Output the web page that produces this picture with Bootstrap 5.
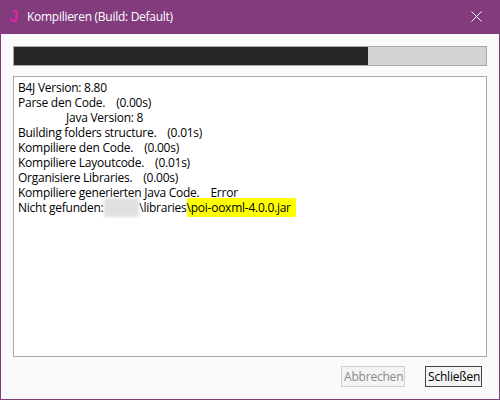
<!DOCTYPE html>
<html lang="de">
<head>
<meta charset="utf-8">
<title>Kompilieren (Build: Default)</title>
<link href="https://cdn.jsdelivr.net/npm/bootstrap@5.3.0/dist/css/bootstrap.min.css" rel="stylesheet">
<style>
html, body { height: 100%; margin: 0; overflow: hidden; }
body { background: #fafafa; font-family: "Open Sans", "Noto Sans", sans-serif; font-size: 12px; color: #000; }
.dlg-win { width: 500px; height: 400px; border: 1px solid #823b7c; border-top: 0; background: #fafafa; }
.dlg-title { height: 34px; margin: 0 -1px; background: #823b7c; color: #fff; padding-left: 9px; padding-right: 18px; padding-bottom: 1px; font-size: 12px; letter-spacing: -.28px; flex: none; }
.dlg-logo { color: #d9269c; font-family: "Liberation Sans", sans-serif; font-weight: 700; font-size: 17px; width: 18px; line-height: 1; }
.dlg-bar { height: 20px; margin: 12px 12px 0; border: 1px solid #a9a9a9; border-radius: 0; background: #d3d3d3; flex: none; }
.dlg-fill { width: 354px; background: #262626; }
.dlg-log { height: 281px; margin: 10px 12px 0; border: 1px solid #a9a9a9; background: #fff; padding: 3px 4px; line-height: 15px; letter-spacing: -.25px; flex: none; }
.dlg-log > div { white-space: pre; height: 15px; }
.dlg-indent { padding-left: 48px; }
.dlg-gap { padding-left: 11px; }
.dlg-blur { display: inline-block; vertical-align: top; width: 35px; height: 19px; margin: -2px 0 -2px -2px; background: #e0e0e0; filter: blur(1.5px); }
.dlg-hl { background: #ffff00; display: inline-block; vertical-align: top; height: 19px; margin-top: -2px; padding: 2px 5px 0 0; }
.dlg-foot { margin: 9px 17px 0 0; }
.dlg-btn { height: 21px; padding: 0 2px; border-radius: 0; font-size: 12px; line-height: 17px; letter-spacing: -.2px; background: #f4f4f4; color: #000; white-space: nowrap; }
.dlg-btn-off { width: 64px; --bs-btn-disabled-color: #8a8a8a; --bs-btn-disabled-bg: #f4f4f4; --bs-btn-disabled-border-color: #cfcfcf; --bs-btn-disabled-opacity: 1; }
.dlg-btn-on { width: 57px; border: 1px solid #444; margin-left: 20px; }
</style>
</head>
<body>
<div class="dlg-win d-flex flex-column">
  <div class="dlg-title d-flex align-items-center">
    <span class="dlg-logo">J</span>
    <span class="flex-grow-1">Kompilieren (Build: Default)</span>
    <svg width="11" height="11" viewBox="0 0 11 11" aria-label="Schließen"><path d="M.5.5l10 10M10.500.5l-10 10" stroke="#fff" stroke-width="1" fill="none"/></svg>
  </div>
  <div class="progress dlg-bar"><div class="progress-bar dlg-fill"></div></div>
  <div class="dlg-log">
<div>B4J Version: 8.80</div>
<div>Parse den Code.<span class="dlg-gap">(0.00s)</span></div>
<div class="dlg-indent">Java Version: 8</div>
<div>Building folders structure.<span class="dlg-gap">(0.01s)</span></div>
<div>Kompiliere den Code.<span class="dlg-gap">(0.00s)</span></div>
<div>Kompiliere Layoutcode.<span class="dlg-gap">(0.01s)</span></div>
<div>Organisiere Libraries.<span class="dlg-gap">(0.00s)</span></div>
<div>Kompiliere generierten Java Code.<span class="dlg-gap">Error</span></div>
<div>Nicht gefunden: <span class="dlg-blur"></span>\libraries<span class="dlg-hl">\poi-ooxml-4.0.0.jar</span></div>
  </div>
  <div class="dlg-foot d-flex justify-content-end">
    <button type="button" class="btn dlg-btn dlg-btn-off" disabled>Abbrechen</button>
    <button type="button" class="btn dlg-btn dlg-btn-on">Schließen</button>
  </div>
</div>
<script src="https://cdn.jsdelivr.net/npm/bootstrap@5.3.0/dist/js/bootstrap.bundle.min.js"></script>
</body>
</html>
